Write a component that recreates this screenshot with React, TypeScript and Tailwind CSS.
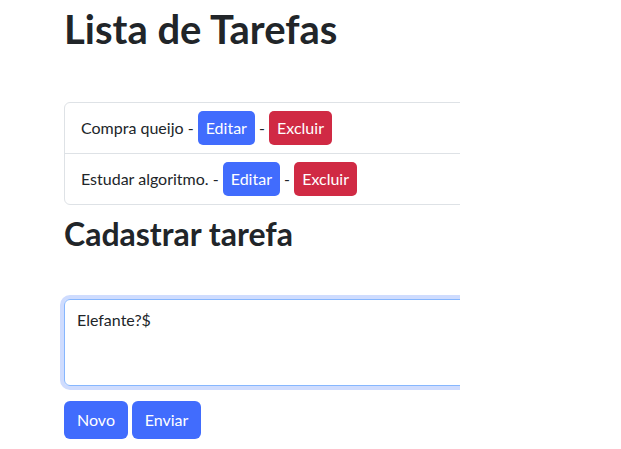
const TAREFAS = ['Compra queijo', 'Estudar algoritmo.']

export default function App() {
  return (
    <div className="min-h-screen bg-white font-['Lato','Noto_Sans',sans-serif] text-[#212529]">
      <div className="w-[460px] overflow-hidden pl-16">
        <h1 className="pt-[5px] text-[40px] font-bold leading-[48px]">Lista de Tarefas</h1>

        <ul className="mt-[49px] w-[500px] rounded-md border border-[#dee2e6]">
          {TAREFAS.map((t, i) => (
            <li
              key={t}
              className={`px-4 py-2 text-base leading-[34px] ${i > 0 ? 'border-t border-[#dee2e6]' : ''}`}
            >
              {t} -{' '}
              <button className="inline-block h-[34px] rounded-[5px] bg-[#416cfd] px-2 align-top text-white">
                Editar
              </button>{' '}
              -{' '}
              <button className="inline-block h-[34px] rounded-[5px] bg-[#d02a44] px-2 align-top text-white">
                Excluir
              </button>
            </li>
          ))}
        </ul>

        <h2 className="mt-[10px] text-[32px] font-bold leading-[38px]">Cadastrar tarefa</h2>

        <div className="mt-[46px] pb-[15px]">
          <textarea
            defaultValue="Elefante?$"
            className="block h-[87px] w-[500px] resize-none rounded-md border border-[#86b7fe] px-3 py-[8px] text-base leading-6 shadow-[0_0_0_4px_#cfdcfe] outline-none"
          />
        </div>

        <div className="flex gap-1">
          <button className="h-[38px] w-16 rounded-md bg-[#416cfd] text-base text-white">Novo</button>
          <button className="h-[38px] w-[69px] rounded-md bg-[#416cfd] text-base text-white">Enviar</button>
        </div>
      </div>
    </div>
  )
}
